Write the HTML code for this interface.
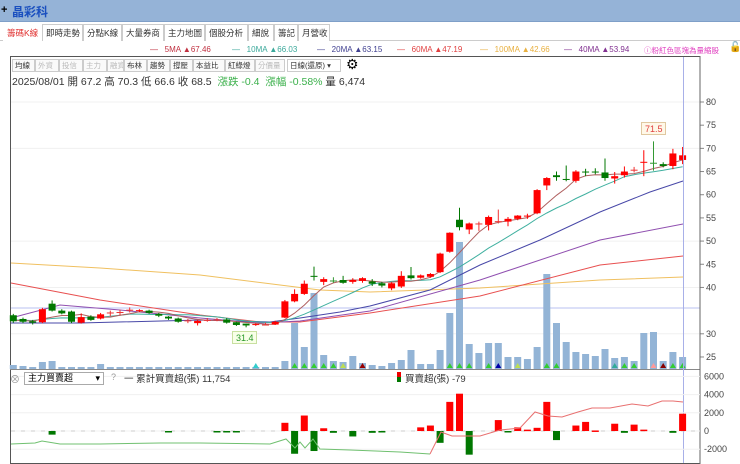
<!DOCTYPE html>
<html><head><meta charset="utf-8">
<style>
*{margin:0;padding:0;box-sizing:border-box}
body{width:740px;height:464px;overflow:hidden;background:#fff;font-family:"Liberation Sans","Noto Sans CJK TC",sans-serif;position:relative}
.t{position:absolute;white-space:nowrap}
#title{position:absolute;left:0;top:0;width:740px;height:22px;background:#95b3d7;border-bottom:1px solid #7f9fc8}
.tab{position:absolute;top:24px;height:17px;border:1px solid #ccc;border-bottom:none;font-size:8.5px;line-height:16px;padding:0 3px;color:#333;background:#fff;white-space:nowrap;overflow:hidden}
.btn{position:absolute;top:59px;height:13px;border:1px solid #ccc;font-size:7.5px;line-height:11px;padding:0 2px;color:#333;background:#fafafa;white-space:nowrap;overflow:hidden}
.btn.d{color:#bbb}
.lg{position:absolute;top:45px;font-size:8px;white-space:nowrap}
</style></head><body>
<div id="title"></div>
<div class="t" style="left:1px;top:4px;font-size:11px;font-weight:bold">+</div>
<div class="t" style="left:12px;top:3px;font-size:12px;font-weight:bold;color:#1a4fbf">晶彩科</div>
<div style="position:absolute;left:0;top:40px;width:740px;height:1px;background:#ccc"></div>
<div class="tab" style="left:3px;width:39px;color:#e0302f;border-color:#fff">籌碼K線</div>
<div class="tab" style="left:42px;width:41px">即時走勢</div>
<div class="tab" style="left:83px;width:39px">分點K線</div>
<div class="tab" style="left:122px;width:42px">大量券商</div>
<div class="tab" style="left:164px;width:41px">主力地圖</div>
<div class="tab" style="left:205px;width:43px">個股分析</div>
<div class="tab" style="left:248px;width:26px">細說</div>
<div class="tab" style="left:274px;width:24px">籌記</div>
<div class="tab" style="left:298px;width:32px">月營收</div>

<div class="lg" style="left:150px;color:#c03040">—&nbsp;&nbsp; 5MA ▲67.46</div>
<div class="lg" style="left:232px;color:#3aa89a">—&nbsp;&nbsp; 10MA ▲66.03</div>
<div class="lg" style="left:317px;color:#404090">—&nbsp;&nbsp; 20MA ▲63.15</div>
<div class="lg" style="left:397px;color:#e04040">—&nbsp;&nbsp; 60MA ▲47.19</div>
<div class="lg" style="left:480px;color:#e8b040">—&nbsp;&nbsp; 100MA ▲42.66</div>
<div class="lg" style="left:564px;color:#803090">—&nbsp;&nbsp; 40MA ▲53.94</div>
<div class="lg" style="left:644px;color:#e040c0;font-size:7.5px">ⓘ粉紅色區塊為量縮股</div>
<div class="t" style="top:42px;font-size:10px;left:729px">🔓</div>

<div class="btn" style="left:12px;width:23px">均線</div>
<div class="btn d" style="left:35px;width:24px">外資</div>
<div class="btn d" style="left:59px;width:24px">投信</div>
<div class="btn d" style="left:83px;width:24px">主力</div>
<div class="btn d" style="left:107px;width:17px">融資</div>
<div class="btn" style="left:124px;width:23px">布林</div>
<div class="btn" style="left:147px;width:23px">趨勢</div>
<div class="btn" style="left:170px;width:23px">撐壓</div>
<div class="btn" style="left:193px;width:32px">本益比</div>
<div class="btn" style="left:225px;width:30px">紅綠燈</div>
<div class="btn d" style="left:255px;width:30px">分價量</div>
<div class="btn" style="left:287px;width:54px;background:#fff">日線(還原) ▾</div>
<div class="t" style="left:346px;top:56px;font-size:14px">⚙</div>
<div class="t" style="left:12px;top:74px;font-size:10.5px;color:#333">2025/08/01 開 67.2 高 70.3 低 66.6 收 68.5 &nbsp;<span style="color:#3bb04b">漲跌 -0.4 &nbsp;漲幅 -0.58%</span> 量 6,474</div>

<svg id="s" width="740" height="464" style="position:absolute;left:0;top:0" xmlns="http://www.w3.org/2000/svg"></svg>

<div style="position:absolute;left:24px;top:372px;width:80px;height:13px;border:1px solid #aaa;font-size:9px;line-height:11px;padding-left:3px;background:#fff">主力買賣超<span style="position:absolute;right:3px">▾</span></div>
<div class="t" style="left:10px;top:371px;font-size:10px;color:#999">⊗</div>
<div class="t" style="left:111px;top:372px;font-size:9px;color:#999">?</div>
<div class="t" style="left:124px;top:371px;font-size:9.5px;color:#333">一 累計買賣超(張) 11,754</div>
<div class="t" style="left:405px;top:371px;font-size:9.5px;color:#333">買賣超(張) -79</div>
<div style="position:absolute;left:397px;top:372px;width:4px;height:5px;background:#e00"></div>
<div style="position:absolute;left:397px;top:377px;width:4px;height:5px;background:#070"></div>
<script>
var s=document.getElementById('s');
function a(t,at){var e=document.createElementNS('http://www.w3.org/2000/svg',t);for(var k in at)e.setAttribute(k,at[k]);s.appendChild(e);return e;}
function tx(x,y,str,c,fs){var e=a('text',{x:x,y:y,fill:c||'#444','font-size':fs||9,'font-family':'Liberation Sans'});e.textContent=str;}
function Y(p){return 102+(80-p)*4.636}
a('rect',{x:10.5,y:56.5,width:689.5,height:407,fill:'none',stroke:'#555'});
a('line',{x1:10,y1:369.5,x2:700,y2:369.5,stroke:'#888'});
[80,70,50,40,30].forEach(function(p){a('line',{x1:11,y1:Y(p),x2:700,y2:Y(p),stroke:'#f0f0f0'})});
[80,75,70,65,60,55,50,45,40,30,25].forEach(function(p){a('line',{x1:700,y1:Y(p),x2:704,y2:Y(p),stroke:'#888'});tx(706,Y(p)+3,p)});
a('line',{x1:11,y1:308,x2:700,y2:308,stroke:'#b8c0f0'});
var D=[[34,32.7,34.3,32.4],[33.2,32.6,33.5,32.3],[32.7,32.4,33,32],[32.5,35.3,35.6,32.3],[36.5,35,37.2,34.8],[35,34.4,35.3,34.2],[34.8,32.6,35,32.3],[32.4,33.6,34.4,32.2],[33.7,33,34,32.8],[33.3,34.2,34.5,33.1],[34.5,34.6,35,33.8],[34.6,34.7,35.2,34],[35.1,35.2,35.7,34.6],[34.9,35.1,35.3,34.7],[35,34.5,35.2,34.3],[34.3,33.9,34.5,33.6],[33.7,33.3,33.8,33],[33.3,32.6,33.5,32.4],[32.8,32.9,33.2,32.3],[32.3,32.8,33,31.8],[33,33,33.4,32.6],[33,33.1,33.4,32.7],[33.1,32.4,33.4,32.2],[32.5,31.9,32.6,31.7],[32.2,31.8,32.2,31.4],[31.9,32.1,32.3,31.7],[32,32,32.4,31.8],[32,32.6,32.8,31.9],[33.5,37,37.3,33.4],[37,38.6,39.6,36.8],[38.6,40.8,41.5,38.4],[42.5,42.3,44.5,41.5],[41.2,41.8,42.2,40.5],[41.5,41.4,42.2,41],[41.6,41,42.5,40.8],[41.2,41.6,42,40.8],[41.4,42,42.2,41],[41.3,40.8,41.8,40.3],[40.9,40.4,41.2,40],[39.8,40.9,41.1,39.4],[40.2,42.5,43.5,39.9],[42.6,42,44.4,41.7],[42.1,42.6,42.8,41.9],[42.3,42.9,43.1,42.1],[43.3,47.3,47.5,43.1],[47.7,51.8,51.9,47.5],[54.6,53,57.2,52.3],[52.5,53.8,54,51.5],[53.8,53.8,54.2,52.2],[53.5,55.2,55.5,52.3],[54.3,54.3,56.8,53.8],[54.2,54.8,55.2,53.2],[54.8,55.5,55.6,54.5],[55.3,55.5,55.9,54.8],[56,61,61.2,55.8],[62,63.6,63.8,61],[64.2,63.8,65,63],[63.4,63.2,66.3,62.9],[63,65,65.3,62.6],[65,64.8,65.6,64],[65,64.8,65.7,64.4],[64.8,63.6,67.8,63],[63.5,64,64.9,62.4],[64.2,65,66.1,63.7],[65.3,65.4,66,64.8],[66.9,67.1,69.6,64],[66.9,66.8,71.5,65.2],[66.6,66.2,67,65.9],[66.2,68.9,69.9,65.5],[67.5,68.5,70.3,66.6]];
function X(i){return 13.3+i*9.7}
var V=[365,366,367,362,361,367,367,367,367,364,367,367,367,367,367,367,367,367,367,367,367,367,367,367,367,367,367,367,361,323,347,293,355,361,362,356,363,365,366,363,360,350,364,364,350,313,242,344,353,343,343,357,357,359,347,274,323,342,352,354,356,349,358,357,361,333,332,361,352,357];
V.forEach(function(v,i){a('rect',{x:X(i)-3.5,y:v,width:7,height:369-v,fill:'#93b4d6'})});
[[29,'#3c3'],[30,'#3c3'],[31,'#3c3'],[33,'#3c3'],[45,'#3c3'],[46,'#3c3'],[47,'#3c3'],[49,'#3c3'],[50,'#00a'],[52,'#bd5'],[55,'#3c3'],[56,'#3c3'],[62,'#3a9'],[63,'#3c3'],[64,'#3c3'],[66,'#f99'],[67,'#800'],[68,'#3c3'],[69,'#3c3'],[32,'#3c3'],[25,'#3cc'],[34,'#bd5'],[36,'#900']].forEach(function(m){var x=X(m[0]);a('polygon',{points:(x-3)+',368 '+(x+3)+',368 '+x+',363',fill:m[1]})});
function pl(pts,c){a('polyline',{points:pts,fill:'none',stroke:c,'stroke-width':1})}
pl('11,263 100,268 200,275 280,285 320,290 370,292 480,288 600,280 683,277','#f0c060');
pl('11,283 100,300 200,315 260,322 300,322 370,313 480,296 600,265 683,256','#e85050');
pl('11,318 60,305 120,310 200,318 260,323 300,321 370,311 480,280 600,240 683,224','#9050b0');
pl('11,323 80,323 200,320 270,322 300,318 340,312 370,306 430,290 480,265 540,240 600,212 650,192 683,181','#4848a8');
var cl=D.map(function(d){return d[1]});var pad=[33,33,33,33,33,33,33,33,33];var all=pad.concat(cl);
function ma(n,c){var pts=[];for(var i=0;i<cl.length;i++){var sm=0;for(var k=0;k<n;k++)sm+=all[i+9-k];pts.push(X(i)+','+Y(sm/n).toFixed(1));}pl(pts.join(' '),c)}
ma(10,'#40b0a0');ma(5,'#b06060');
D.forEach(function(d,i){var x=X(i),o=d[0],c=d[1];var col=c>o?'#f00':'#070';if(Math.abs(c-o)<0.15)col=c>=o?'#e33':'#393';
a('line',{x1:x,y1:Y(d[2]),x2:x,y2:Y(d[3]),stroke:col});var t=Y(Math.max(o,c)),b=Y(Math.min(o,c));a('rect',{x:x-3.5,y:t,width:7,height:Math.max(1,b-t),fill:col})});
a('rect',{x:641.5,y:122.5,width:24,height:12,fill:'#fff8e8',stroke:'#e0c8a0'});tx(645,132,'71.5','#e04040',9);
a('rect',{x:232.5,y:331.5,width:24,height:12,fill:'#f8ffe8',stroke:'#c8e0a0'});tx(236,341,'31.4','#2a9a2a',9);
a('line',{x1:683.5,y1:57,x2:683.5,y2:463,stroke:'#a8b0e8'});
a('line',{x1:700,y1:56,x2:700,y2:464,stroke:'#666'});
function Z(v){return 431-v*0.0091}
[6000,4000,2000,0,-2000].forEach(function(v){a('line',{x1:11,y1:Z(v),x2:700,y2:Z(v),stroke:'#f0f0f0'});tx(704,Z(v)+3,v)});
a('line',{x1:11,y1:431,x2:700,y2:431,stroke:'#ccc','stroke-dasharray':'4,6'});
var B=[[4,-400],[16,-60],[21,-40],[22,-60],[23,-50],[28,900],[29,-2500],[30,1700],[31,-2200],[32,300],[33,-200],[35,-600],[37,-200],[38,-60],[42,400],[43,600],[44,-1300],[45,3200],[46,4100],[47,-2600],[50,1200],[51,-100],[52,400],[53,150],[54,350],[55,3200],[56,-1000],[58,600],[59,1000],[60,60],[62,800],[63,-200],[64,700],[65,150],[68,-200],[69,1900]];
B.forEach(function(b){var x=X(b[0]);var v=b[1];var y1=Z(Math.max(v,0)),y2=Z(Math.min(v,0));a('rect',{x:x-3.5,y:y1,width:7,height:Math.max(1.5,y2-y1),fill:v>0?'#f00':'#070'})});
pl('11,444 35,443 42,441 60,444 100,444 160,443 200,443 270,444 286,439 295,448 300,442 305,448 313,439 320,449 350,450 400,452 430,454','#70c070');
pl('430,454 441,432 452,436 480,436 500,430 520,428 535,412 548,416 562,417 578,412 592,408 610,408 632,404 648,406 662,401 673,401 683,402','#e87070');
</script>
</body></html>
